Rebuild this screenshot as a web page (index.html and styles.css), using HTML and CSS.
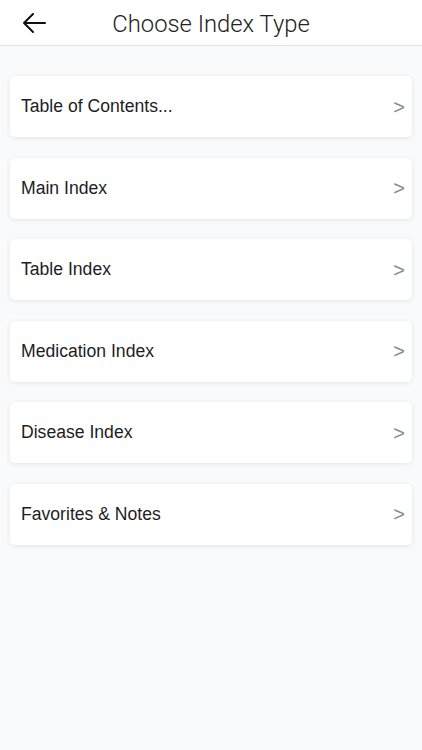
FILE: index.html
```html
<!DOCTYPE html>
<html>
<head>
<meta charset="utf-8">
<link rel="stylesheet" href="styles.css">
</head>
<body>
<header class="header">
  <div class="back">
    <svg width="24" height="20" viewBox="0 0 24 20"><path d="M23 10H2M11 1L2 10l9 9" fill="none" stroke="#111" stroke-width="2" stroke-linecap="round" stroke-linejoin="round"/></svg>
  </div>
  <h1 class="title">Choose Index Type</h1>
</header>
<main class="list">
  <div class="card"><span class="label">Table of Contents...</span><span class="chev">&gt;</span></div>
  <div class="card"><span class="label">Main Index</span><span class="chev">&gt;</span></div>
  <div class="card"><span class="label">Table Index</span><span class="chev">&gt;</span></div>
  <div class="card"><span class="label">Medication Index</span><span class="chev">&gt;</span></div>
  <div class="card"><span class="label">Disease Index</span><span class="chev">&gt;</span></div>
  <div class="card"><span class="label">Favorites &amp; Notes</span><span class="chev">&gt;</span></div>
</main>
</body>
</html>
```
FILE: styles.css
```css
html, body {
  margin: 0;
  padding: 0;
  background: #f9fafc;
  height: 100%;
  font-family: "Liberation Sans", Arial, sans-serif;
}
.header {
  height: 45px;
  background: #fff;
  border-bottom: 1px solid #e2e2e4;
  display: flex;
  align-items: center;
  justify-content: center;
  position: relative;
}
.back {
  position: absolute;
  left: 22px;
  top: 13px;
  width: 24px;
  height: 20px;
  display: flex;
}
.title {
  margin: 2px 0 0 0;
  font-family: Roboto, "Liberation Sans", sans-serif;
  font-weight: 300;
  font-size: 23.8px;
  color: #222;
}
.list {
  padding: 30px 10px 0 10px;
  display: flex;
  flex-direction: column;
  gap: 20.5px;
}
.card {
  height: 61px;
  background: #fff;
  border-radius: 5px;
  box-shadow: 0 1px 5px rgba(0,0,0,0.09);
  display: flex;
  align-items: center;
  justify-content: space-between;
  padding: 0 7px 0 11px;
}
.label {
  font-size: 17.6px;
  color: #1d1d1f;
}
.chev {
  font-size: 20px;
  color: #8a8a8e;
  margin-top: 1px;
}
```
